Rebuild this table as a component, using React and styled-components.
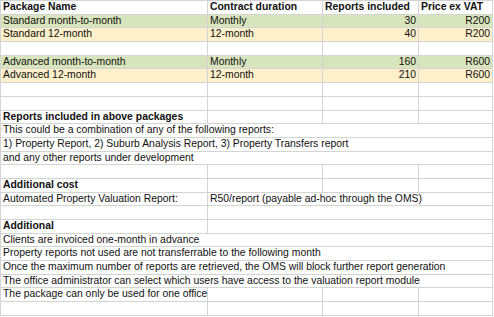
import React from 'react';
import styled, { createGlobalStyle } from 'styled-components';

const GlobalStyle = createGlobalStyle`
  html, body {
    margin: 0;
    padding: 0;
    background: #ffffff;
  }
`;

const rows = [
  { cells: ['Package Name', 'Contract duration', 'Reports included', 'Price ex VAT'], bold: true },
  { cells: ['Standard month-to-month', 'Monthly', '30', 'R200'], tone: 'green' },
  { cells: ['Standard 12-month', '12-month', '40', 'R200'], tone: 'yellow' },
  { cells: ['', '', '', ''] },
  { cells: ['Advanced month-to-month', 'Monthly', '160', 'R600'], tone: 'green' },
  { cells: ['Advanced 12-month', '12-month', '210', 'R600'], tone: 'yellow' },
  { cells: ['', '', '', ''] },
  { cells: ['', '', '', ''] },
  { cells: ['Reports included in above packages', '', '', ''], bold: true },
  { full: 'This could be a combination of any of the following reports:' },
  { full: '1) Property Report, 2) Suburb Analysis Report, 3) Property Transfers report' },
  { full: 'and any other reports under development' },
  { cells: ['', '', '', ''] },
  { cells: ['Additional cost', '', '', ''], bold: true },
  { split: ['Automated Property Valuation Report:', 'R50/report (payable ad-hoc through the OMS)'] },
  { split: ['', ''] },
  { split: ['Additional', ''], bold: true },
  { full: 'Clients are invoiced one-month in advance' },
  { full: 'Property reports not used are not transferrable to the following month' },
  { full: 'Once the maximum number of reports are retrieved, the OMS will block further report generation' },
  { full: 'The office administrator can select which users have access to the valuation report module' },
  { cells: ['The package can only be used for one office', '', '', ''] },
  { cells: ['', '', '', ''] },
];

const tones = {
  green: '#d8e4bc',
  yellow: '#fdf0ca',
};

class App extends React.Component {
  renderRow = (row, i) => {
    if (row.full) {
      return (
        <Row key={i}>
          <Cell span={4}>{row.full}</Cell>
        </Row>
      );
    }
    if (row.split) {
      return (
        <Row key={i}>
          <Cell bold={row.bold}>{row.split[0]}</Cell>
          <Cell span={3}>{row.split[1]}</Cell>
        </Row>
      );
    }
    return (
      <Row key={i} tone={row.tone}>
        {row.cells.map((text, j) => (
          <Cell key={j} bold={row.bold} numeric={!row.bold && j > 1}>
            {text}
          </Cell>
        ))}
      </Row>
    );
  };

  render() {
    return (
      <>
        <GlobalStyle />
        <Sheet>{rows.map(this.renderRow)}</Sheet>
      </>
    );
  }
}

const Sheet = styled.div`
  width: 493px;
  box-sizing: border-box;
  border-left: 1px solid #d4d4d4;
  border-top: 1px solid #d4d4d4;
  font-family: "Liberation Sans", Arial, sans-serif;
  font-size: 10.4px;
  color: #111111;
`;

const Row = styled.div`
  display: grid;
  grid-template-columns: 207px 115px 96px 74px;
  height: 13.7px;
  box-sizing: border-box;
  border-bottom: 1px solid #d4d4d4;
  background: ${p => (p.tone ? tones[p.tone] : '#ffffff')};
`;

const Cell = styled.div`
  grid-column: span ${p => p.span || 1};
  box-sizing: border-box;
  border-right: 1px solid #d4d4d4;
  padding: 0 2px 0 2px;
  line-height: 12.7px;
  white-space: nowrap;
  overflow: visible;
  font-weight: ${p => (p.bold ? 700 : 400)};
  text-align: ${p => (p.numeric ? 'right' : 'left')};
`;

export default App;
